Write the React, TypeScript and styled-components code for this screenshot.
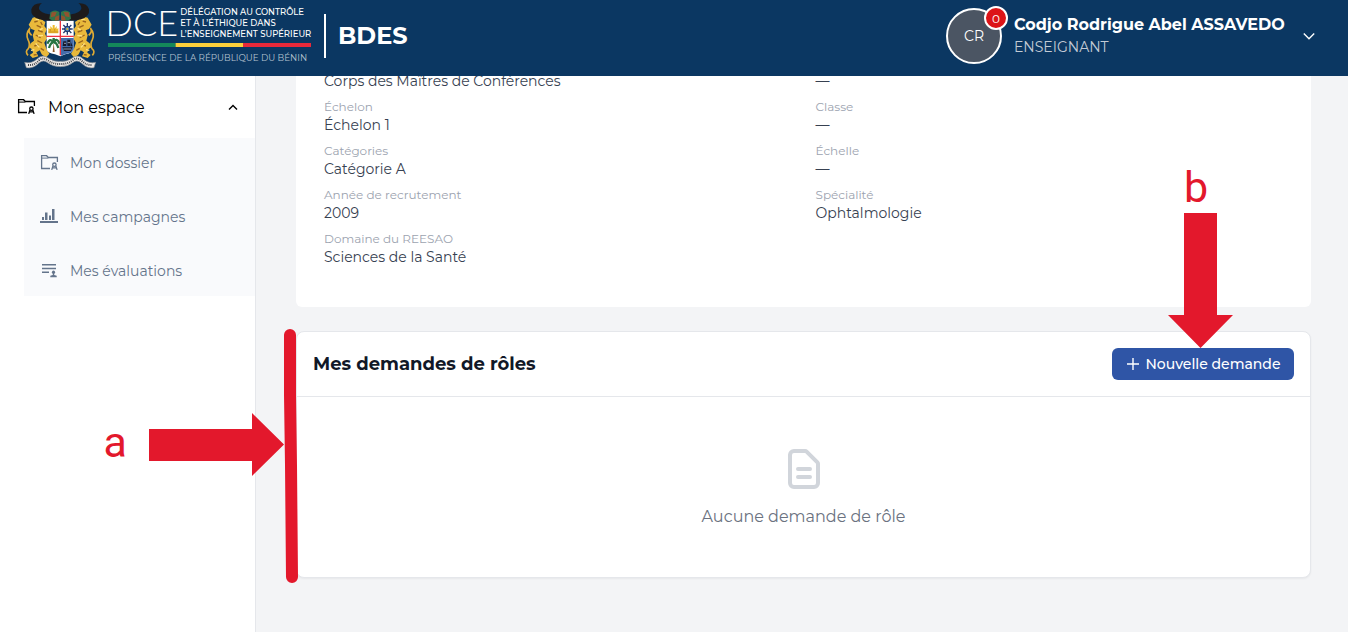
import React from "react";
import styled, { createGlobalStyle } from "styled-components";

const GlobalStyle = createGlobalStyle`
  *, *::before, *::after { box-sizing: border-box; }
  body {
    margin: 0;
    background: #f3f4f6;
    color: #374151;
    font-family: Montserrat, Inter, "Open Sans", sans-serif;
    font-size: 16px;
  }
  button { font-family: inherit; }
  h1, h2, p, dl, dd, ul { margin: 0; padding: 0; }
  a { color: inherit; text-decoration: none; }
`;

const Page = styled.div`
  min-height: 100vh;
  display: flex;
  flex-direction: column;
`;

const TopBar = styled.header`
  position: sticky;
  top: 0;
  z-index: 10;
  height: 76px;
  flex-shrink: 0;
  padding: 0 32px 4px 20px;
  display: flex;
  align-items: center;
  justify-content: space-between;
  background: #0b3762;
  color: #fff;
  white-space: nowrap;
`;

const Brand = styled.div`
  display: flex;
  align-items: center;
`;

const Wordmark = styled.svg`
  margin: 0 12px 0 8px;
  overflow: visible;
`;

const AppName = styled.h1`
  border-left: 2px solid #fff;
  padding-left: 12px;
  font-size: 24px;
  line-height: 44px;
  font-weight: 700;
`;

const UserButton = styled.button`
  display: flex;
  align-items: center;
  padding: 0;
  border: 0;
  background: none;
  color: #fff;
  text-align: left;
  cursor: pointer;
`;

const Avatar = styled.span`
  position: relative;
  width: 56px;
  height: 56px;
  margin-right: 12px;
  display: flex;
  align-items: center;
  justify-content: center;
  border: 2px solid #fff;
  border-radius: 50%;
  background: #4b5563;
  font-size: 14px;
`;

const Badge = styled.span`
  position: absolute;
  top: -4px;
  right: -8px;
  width: 24px;
  height: 24px;
  display: flex;
  align-items: center;
  justify-content: center;
  border: 2px solid #fff;
  border-radius: 50%;
  background: #dc1418;
  font-size: 12px;
`;

const UserText = styled.span`
  min-width: 279px;
  margin-right: 9px;
  padding-bottom: 2px;
  display: flex;
  flex-direction: column;
`;

const UserName = styled.span`
  font-size: 16px;
  line-height: 24px;
  font-weight: 700;
`;

const UserRole = styled.span`
  font-size: 14px;
  line-height: 20px;
  color: #c3cbd5;
`;

const Body = styled.div`
  flex: 1;
  display: flex;
`;

const Sidebar = styled.nav`
  width: 256px;
  flex-shrink: 0;
  border-right: 1px solid #e5e7eb;
  background: #fff;
`;

const GroupButton = styled.button`
  width: 100%;
  height: 62px;
  padding: 0 16px;
  display: flex;
  align-items: center;
  gap: 12px;
  border: 0;
  background: none;
  color: #000;
  font-size: 16px;
  cursor: pointer;
  svg:last-child { margin-left: auto; }
`;

const SubMenu = styled.ul`
  margin-left: 24px;
  display: flex;
  flex-direction: column;
  gap: 4px;
  background: #f9fafc;
  list-style: none;
`;

const SubLink = styled.a`
  height: 50px;
  padding-left: 15px;
  display: flex;
  align-items: center;
  gap: 11px;
  color: #64748b;
  font-size: 14px;
`;

const Main = styled.main`
  flex: 1;
  min-width: 0;
  margin-top: -5px;
  padding: 0 37px 32px 40px;
`;

const Profile = styled.dl`
  padding: 0 28px 40px;
  display: grid;
  grid-template-columns: 1fr 1fr;
  column-gap: 24px;
  row-gap: 8px;
  border-radius: 0 0 6px 6px;
  background: #fff;
`;

const FieldLabel = styled.dt`
  font-size: 12px;
  line-height: 16px;
  color: #9ca3af;
`;

const FieldValue = styled.dd`
  font-size: 14px;
  line-height: 20px;
  color: #374151;
`;

const Card = styled.section`
  position: relative;
  margin-top: 24px;
  border: 1px solid #e5e7eb;
  border-radius: 8px;
  background: #fff;
  box-shadow: 0 1px 2px rgba(0, 0, 0, 0.05);
`;

const CardHead = styled.div`
  padding: 16px;
  display: flex;
  align-items: center;
  justify-content: space-between;
  border-bottom: 1px solid #e5e7eb;
`;

const CardTitle = styled.h2`
  font-size: 18px;
  line-height: 28px;
  font-weight: 700;
  color: #111827;
`;

const Action = styled.div`
  position: relative;
`;

const PrimaryButton = styled.button`
  height: 32px;
  min-width: 182px;
  padding: 0 12px;
  display: flex;
  align-items: center;
  justify-content: center;
  gap: 4px;
  border: 0;
  border-radius: 6px;
  background: #2f55a6;
  color: #fff;
  font-size: 14px;
  font-weight: 500;
  white-space: nowrap;
  cursor: pointer;
`;

const EmptyState = styled.div`
  padding: 48px 16px;
  display: flex;
  flex-direction: column;
  align-items: center;
  gap: 12px;
  font-size: 16px;
  line-height: 24px;
  color: #6b7280;
`;

const Marker = styled.span`
  padding-bottom: 8px;
  color: #e3182c;
  font-family: Roboto, sans-serif;
  font-size: 43px;
  line-height: 48px;
`;

const DownCallout = styled.div`
  position: absolute;
  bottom: 100%;
  left: 56px;
  display: flex;
  flex-direction: column;
  align-items: flex-start;
  z-index: 2;
  pointer-events: none;
  svg { display: block; }
  ${Marker} { padding: 0 0 2px 16px; }
`;

const SideCallout = styled.div`
  position: absolute;
  top: 81px;
  right: 100%;
  margin-right: 13px;
  display: flex;
  align-items: center;
  gap: 22px;
  z-index: 2;
  pointer-events: none;
  ${Marker} { padding-bottom: 6px; }
`;

const EdgeStroke = styled.svg`
  position: absolute;
  top: -3px;
  left: -14px;
  z-index: 2;
`;

const Lion = () => (
  <g>
    <path d="M38 53 Q52 47 63 57 L76 66 L73 78 L80 88 L75 101 L81 115 L73 128 L79 146 L88 161 L78 173 L65 163 L59 151 L49 157 L55 169 L38 174 L29 165 L39 158 L36 148 L27 142 L32 130 L42 122 L38 106 L44 91 L34 87 L26 74 Z" fill="#e9b93b" />
    <path d="M35 106 Q22 94 30 84 Q16 101 24 119 Q32 134 25 146 Q14 155 24 166" fill="none" stroke="#dfaa33" strokeWidth="5" />
    <path d="M43 66 L53 63 M50 76 L63 82 M54 91 L68 96 M47 105 L62 113 M52 122 L66 129 M43 138 L55 134 M62 145 L72 151 M41 165 L50 164 M62 66 L67 75" stroke="#98631d" strokeWidth="4" />
    <path d="M47 59 L57 58 M59 90 L68 85 M54 108 L69 106 M47 130 L58 142 M33 151 L43 149" stroke="#ffe387" strokeWidth="4" />
  </g>
);

const Horn = () => (
  <g>
    <path d="M66 10 Q40 8 34 28 Q31 50 58 58 Q82 64 101 60 L117 54 V36 Q103 46 87 43 Q62 39 57 27 Q56 16 66 10 Z" fill="#1d1a1b" />
    <path d="M91 37 Q105 26 118 36 L118 60 Q101 67 88 56 Z" fill="#31754a" />
    <path d="M95 37 L110 36 L105 49 L92 52 Z M106 50 L118 46 L117 61 L104 62 Z" fill="#93532f" />
  </g>
);

const CoatOfArms = () => (
  <svg width="80" height="74" viewBox="0 -3 240 222" role="img" aria-label="Armoiries du Bénin">
    <Lion />
    <g transform="translate(241 0) scale(-1 1)"><Lion /></g>
    <path d="M80 62 H161 V148 Q158 160 136 163 L121 169 L105 163 Q82 160 80 148 Z" fill="#fff" />
    <path d="M123 114 H161 V147 Q158 159 136 162 L123 167 Z" fill="#446cab" />
    <path d="M85 100 V84 L91 88 V78 L98 86 V75 H104 V86 L110 78 V88 L115 84 V100 Z" fill="#edbb2c" />
    <path d="M85 96 H115 M91 87 V94 M104 86 V94" stroke="#bd811d" strokeWidth="2" />
    <path d="M142 69 V104 M126 87 H158 M130 75 L154 99 M154 75 L130 99" stroke="#243c72" strokeWidth="4" />
    <circle cx="142" cy="87" r="8" fill="#4d84bd" stroke="#182b5e" strokeWidth="3" />
    <circle cx="142" cy="87" r="3" fill="#edbb2c" />
    <path d="M101 128 L104 156 H98 Z" fill="#8b592a" />
    <path d="M101 129 Q91 111 82 131 M101 128 Q93 125 87 144 M101 128 Q109 110 119 131 M101 128 Q109 125 115 144 M101 128 V114" fill="none" stroke="#297441" strokeWidth="7" />
    <path d="M127 142 H158 L152 153 H132 Z M130 124 H139 V138 H128 Z M142 119 H151 V138 H142 Z M153 127 L158 139 H152 Z" fill="#16192b" />
    <path d="M130 147 H154 M132 130 H138 M143 128 H150" stroke="#d3dded" strokeWidth="2" />
    <path d="M121 62 V166 M80 109 H161" stroke="#ee3440" strokeWidth="4" />
    <Horn />
    <g transform="translate(241 0) scale(-1 1)"><Horn /></g>
    <path d="M14 187 Q34 192 51 177 Q67 162 83 173 Q101 186 121 184 Q141 186 158 173 Q174 162 190 177 Q207 192 227 187 L222 203 Q202 207 185 190 Q171 177 158 188 Q144 200 121 200 Q98 200 83 188 Q70 177 56 190 Q39 207 19 203 Z" fill="#ece9e6" stroke="#80868d" strokeWidth="2" />
    <path d="M24 195 Q43 197 57 181 Q69 171 82 180 Q99 193 121 192 Q143 193 159 180 Q171 171 184 181 Q199 197 217 195" fill="none" stroke="#45484d" strokeWidth="6" strokeDasharray="3 3" />
  </svg>
);

const DceLogo = () => (
  <Wordmark width="204" height="60" viewBox="0 0 2040 600" fill="#fff" fontFamily="Montserrat, sans-serif">
    <text x="-24" y="300" fontFamily="Lato, sans-serif" fontSize="360" fontWeight="300">DCE</text>
    <g fontSize="85" fontWeight="500">
      <text x="722" y="86">DÉLÉGATION AU CONTRÔLE</text>
      <text x="722" y="196">ET À L’ÉTHIQUE DANS</text>
      <text x="722" y="306">L’ENSEIGNEMENT SUPÉRIEUR</text>
    </g>
    <path d="M0 370h676v40H0z" fill="#14885a" />
    <path d="M676 370h674v40H676z" fill="#fdd03b" />
    <path d="M1350 370h680v40h-680z" fill="#e9293a" />
    <text x="0" y="546" fontSize="88" fill="#b5c3d0">PRÉSIDENCE DE LA RÉPUBLIQUE DU BÉNIN</text>
  </Wordmark>
);

const FolderUserIcon = () => (
  <svg width="20" height="20" viewBox="0 0 20 20" fill="none" stroke="currentColor" strokeWidth="1.3" aria-hidden="true">
    <path d="M11 15.5H2.6V2.7h5L9.3 4.5h9.1v4.6" />
    <path d="M2.6 5.1h6.7" strokeWidth="1" />
    <circle cx="15.4" cy="11.7" r="1.7" />
    <path d="m14 13-1.3 3.9M16.8 13l1.3 3.9M13.5 14.8h3.8" />
  </svg>
);

const BarsIcon = () => (
  <svg width="20" height="20" viewBox="0 0 20 20" fill="currentColor" aria-hidden="true">
    <path d="M1 14h18v2H1zM3 10h2v3H3zM6 5.500h2.500V13H6zM10 8.500h2V13h-2zM13 2h2.500v11H13z" />
  </svg>
);

const ListUserIcon = () => (
  <svg width="20" height="20" viewBox="0 0 20 20" fill="currentColor" aria-hidden="true">
    <path d="M3 3h14v1.500H3zM3 6.800h14v1.500H3zM3 10.600h7v1.500H3z" />
    <circle cx="14.5" cy="11.2" r="1.6" />
    <path d="M13.8 12h1.4v2l2.500.8v1.400h-6.400v-1.400l2.500-.8z" />
  </svg>
);

const Chevron = ({ up = false }: { up?: boolean }) => (
  <svg width="14" height="14" viewBox="0 0 14 14" fill="none" stroke="currentColor" strokeWidth="1.4" aria-hidden="true">
    {up ? <path d="M4 9.500 8 5.500 12 9.500" /> : <path d="M1.800 4.500 7 9.700l5.200-5.200" />}
  </svg>
);

const fields: [string | null, string][] = [
  [null, "Corps des Maîtres de Conférences"],
  [null, "—"],
  ["Échelon", "Échelon 1"],
  ["Classe", "—"],
  ["Catégories", "Catégorie A"],
  ["Échelle", "—"],
  ["Année de recrutement", "2009"],
  ["Spécialité", "Ophtalmologie"],
  ["Domaine du REESAO", "Sciences de la Santé"],
];

export default function App() {
  return (
    <Page>
      <GlobalStyle />
      <TopBar>
        <Brand>
          <CoatOfArms />
          <DceLogo />
          <AppName>BDES</AppName>
        </Brand>
        <UserButton type="button">
          <Avatar>CR<Badge>0</Badge></Avatar>
          <UserText>
            <UserName>Codjo Rodrigue Abel ASSAVEDO</UserName>
            <UserRole>ENSEIGNANT</UserRole>
          </UserText>
          <Chevron />
        </UserButton>
      </TopBar>
      <Body>
        <Sidebar>
          <GroupButton type="button" aria-expanded="true">
            <FolderUserIcon />
            Mon espace
            <Chevron up />
          </GroupButton>
          <SubMenu>
            <li><SubLink href="#dossier"><FolderUserIcon />Mon dossier</SubLink></li>
            <li><SubLink href="#campagnes"><BarsIcon />Mes campagnes</SubLink></li>
            <li><SubLink href="#evaluations"><ListUserIcon />Mes évaluations</SubLink></li>
          </SubMenu>
        </Sidebar>
        <Main>
          <Profile>
            {fields.map(([label, value], i) => (
              <div key={i}>
                {label && <FieldLabel>{label}</FieldLabel>}
                <FieldValue>{value}</FieldValue>
              </div>
            ))}
          </Profile>
          <Card>
            <CardHead>
              <CardTitle>Mes demandes de rôles</CardTitle>
              <Action>
                <PrimaryButton type="button">
                  <svg width="16" height="16" viewBox="0 0 16 16" fill="none" stroke="currentColor" strokeWidth="1.4" aria-hidden="true">
                    <path d="M8 2v12M2 8h12" />
                  </svg>
                  Nouvelle demande
                </PrimaryButton>
                <DownCallout>
                  <Marker>b</Marker>
                  <svg width="65" height="135" viewBox="0 0 65 135" fill="#e3182c" aria-hidden="true">
                    <path d="M16 0h33v102h16L32.500 135 0 102h16z" />
                  </svg>
                </DownCallout>
              </Action>
            </CardHead>
            <EmptyState>
              <svg width="48" height="48" viewBox="0 0 24 24" fill="none" stroke="#d1d5db" strokeWidth="2" strokeLinecap="round" strokeLinejoin="round" aria-hidden="true">
                <path d="M9 12h6m-6 4h6m2 5H7a2 2 0 01-2-2V5a2 2 0 012-2h5.586a1 1 0 01.707.293l5.414 5.414a1 1 0 01.293.707V19a2 2 0 01-2 2z" />
              </svg>
              <p>Aucune demande de rôle</p>
            </EmptyState>
            <SideCallout>
              <Marker>a</Marker>
              <svg width="135" height="63" viewBox="0 0 135 63" fill="#e3182c" aria-hidden="true">
                <path d="M0 16h103V0l32 31.500L103 63V48H0z" />
              </svg>
            </SideCallout>
            <EdgeStroke width="15" height="255" viewBox="0 0 15 255" aria-hidden="true">
              <path d="M7 6v60l1 70 1 112" fill="none" stroke="#e3182c" strokeWidth="12" strokeLinecap="round" strokeLinejoin="round" />
            </EdgeStroke>
          </Card>
        </Main>
      </Body>
    </Page>
  );
}
